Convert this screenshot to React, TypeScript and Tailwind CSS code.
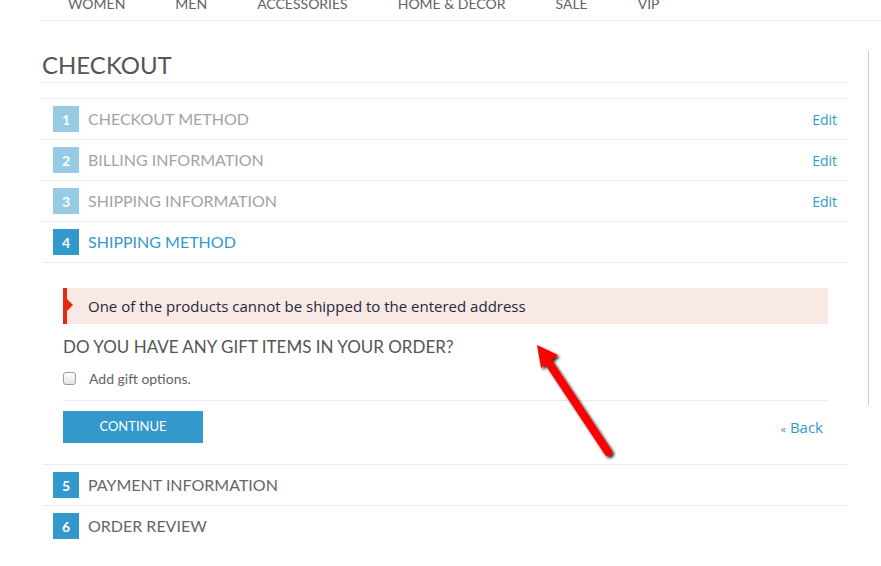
import React from "react";

type Step = { n: number; label: string; state: "done" | "active" | "todo" };

const steps: Step[] = [
  { n: 1, label: "CHECKOUT METHOD", state: "done" },
  { n: 2, label: "BILLING INFORMATION", state: "done" },
  { n: 3, label: "SHIPPING INFORMATION", state: "done" },
  { n: 4, label: "SHIPPING METHOD", state: "active" },
];

const later: Step[] = [
  { n: 5, label: "PAYMENT INFORMATION", state: "todo" },
  { n: 6, label: "ORDER REVIEW", state: "todo" },
];

function StepRow({ step }: { step: Step }) {
  const badge = step.state === "done" ? "bg-[#96cbe5]" : "bg-[#3399cc]";
  const text =
    step.state === "done"
      ? "text-[#a3a3a3]"
      : step.state === "active"
      ? "text-[#3399cc]"
      : "text-[#666666]";
  return (
    <div className="flex h-[41px] items-center border-t border-[#ececec] pl-[11px] pr-[11px]">
      <div
        className={`flex h-[26px] w-[26px] items-center justify-center ${badge} font-['Lato'] text-[14px] font-bold text-white`}
      >
        {step.n}
      </div>
      <div className={`ml-[9px] font-['Lato'] text-[16px] ${text}`}>{step.label}</div>
      {step.state === "done" && (
        <a className="ml-auto font-['Open_Sans'] text-[14px] text-[#3399cc]">Edit</a>
      )}
    </div>
  );
}

export default function App() {
  const nav = ["WOMEN", "MEN", "ACCESSORIES", "HOME & DECOR", "SALE", "VIP"];

  return (
    <div className="relative h-[566px] w-[881px] overflow-hidden bg-white font-['Lato',sans-serif]">
      {/* top nav */}
      <div className="ml-[42px] flex h-[21px] items-start gap-[50px] border-b border-[#ececec] pl-[26px]">
        {nav.map((item) => (
          <span key={item} className="-mt-[3px] text-[14px] leading-[14px] text-[#636363]">
            {item}
          </span>
        ))}
      </div>

      <div className="flex">
        <div className="ml-[42px] w-[806px]">
          <h1 className="mt-[29px] border-b border-[#ececec] pb-[2px] text-[24px] leading-[30px] text-[#555555]">
            CHECKOUT
          </h1>

          <div className="mt-[15px]">
            {steps.map((s) => (
              <StepRow key={s.n} step={s} />
            ))}

            {/* active step body */}
            <div className="border-t border-[#ececec] pl-[21px] pr-[20px] pt-[25px] pb-[21px]">
              <div className="relative flex h-[36px] items-center bg-[#f9e9e5] pl-[25px]">
                <div className="absolute left-0 top-0 h-full w-[4px] bg-[#e0290f]" />
                <div className="absolute left-[4px] top-[11px] h-0 w-0 border-y-[6px] border-l-[6px] border-y-transparent border-l-[#e0290f]" />
                <span className="font-['Open_Sans'] text-[15px] text-[#26283a]">
                  One of the products cannot be shipped to the entered address
                </span>
              </div>

              <h2 className="mt-[12px] text-[17px] leading-[22px] text-[#555555]">
                DO YOU HAVE ANY GIFT ITEMS IN YOUR ORDER?
              </h2>

              <label className="mt-[9px] flex h-[22px] items-center">
                <span className="h-[13px] w-[13px] rounded-[3px] border border-[#9a9a9a] bg-gradient-to-b from-white to-[#e4e4e4]" />
                <span className="ml-[13px] text-[14px] text-[#636363]">Add gift options.</span>
              </label>

              <div className="mt-[11px] flex items-center justify-between border-t border-[#ececec] pt-[10px] pr-[5px]">
                <button className="h-[32px] w-[140px] bg-[#3399cc] font-['Lato'] text-[13px] text-white">
                  CONTINUE
                </button>
                <a className="font-['Open_Sans'] text-[15px] text-[#3399cc]">
                  <span className="text-[11px]">«</span> Back
                </a>
              </div>
            </div>

            {later.map((s) => (
              <StepRow key={s.n} step={s} />
            ))}
          </div>
        </div>

        {/* sidebar edge */}
        <div className="ml-[20px] mt-[30px] h-[354px] border-l border-[#cccccc]" />
      </div>

      {/* red annotation arrow */}
      <svg
        className="absolute left-[520px] top-[330px]"
        width="110"
        height="140"
        viewBox="0 0 110 140"
      >
        <defs>
          <filter id="sh" x="-30%" y="-30%" width="160%" height="160%">
            <feDropShadow dx="2" dy="2" stdDeviation="1.5" floodColor="#000" floodOpacity="0.85" />
          </filter>
        </defs>
        <g filter="url(#sh)">
          <line x1="27" y1="30" x2="88" y2="122" stroke="#ff0000" strokeWidth="8" strokeLinecap="round" />
          <polygon points="17,15 38,25 21,38" fill="#ff0000" />
        </g>
      </svg>
    </div>
  );
}
